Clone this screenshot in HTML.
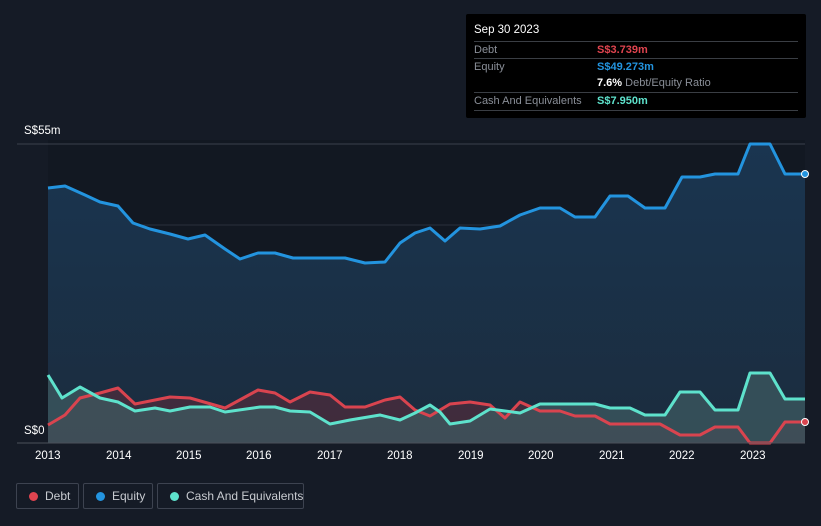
<!DOCTYPE html>
<html><head><style>
html,body{margin:0;background:#151b26;width:821px;height:526px;overflow:hidden;font-family:"Liberation Sans",sans-serif;position:relative}
.tt{position:absolute;left:466px;top:14px;width:340px;height:104px;background:#000;border-radius:2px;font-size:11px;color:#8a8f98}
.tt .h{position:absolute;left:8px;top:10px;color:#fff;font-size:11.5px}
.tt .row{position:absolute;left:8px;width:324px;border-top:1px solid #3a3e44;height:17px;line-height:17px;white-space:nowrap}
.tt .v{position:absolute;left:123px;font-weight:bold}
.leg{position:absolute;top:483px;height:26px;border:1px solid #3d4350;border-radius:2px;color:#c8cbd0;font-size:12px;line-height:24px;box-sizing:border-box;white-space:nowrap}
.leg i{position:absolute;left:12px;top:8px;width:9px;height:9px;border-radius:50%}
.leg span{position:absolute;left:28px}
.ax{position:absolute;color:#fff;font-size:11.5px}
</style></head><body>
<svg width="821" height="526" style="position:absolute;left:0;top:0">
<defs>
<linearGradient id="eg" x1="0" y1="0" x2="0" y2="1"><stop offset="0" stop-color="#1a3550"/><stop offset="1" stop-color="#1b2c3e"/></linearGradient>
</defs>
<rect x="48" y="140" width="757" height="303" fill="#121822"/>
<line x1="17" y1="144" x2="805" y2="144" stroke="#3b414c"/>
<line x1="48" y1="225" x2="805" y2="225" stroke="#2b313c"/>
<line x1="48" y1="333" x2="805" y2="333" stroke="#2b313c"/>
<polygon fill="url(#eg)" points="48,443 48,188 65,186 85,195 100,202 118,206 133,223 150,229 170,234 188,239 205,235 225,249 240,259 258,253 275,253 293,258 310,258 345,258 365,263 385,262 400,243 415,233 430,228 445,241 460,228 480,229 500,226 520,215 540,208 560,208 575,217 595,217 610,196 628,196 645,208 665,208 682,177 700,177 715,174 738,174 750,144 770,144 785,174 805,174 805,443"/>
<polygon fill="#4a2c3c" opacity="0.8" points="48,443 48,425 65,415 80,398 100,393 118,388 135,404 170,397 190,398 225,408 258,390 275,393 290,402 310,392 330,395 345,407 365,407 385,400 400,397 415,410 430,416 450,404 470,402 490,405 505,418 520,402 540,411 560,411 575,416 595,416 610,424 660,424 680,435 700,435 715,427 738,427 750,443 770,443 785,422 805,422 805,443"/>
<polygon fill="#3d5a60" opacity="0.75" points="48,443 48,375 62,398 80,387 100,398 118,402 135,411 155,408 170,411 190,407 210,407 225,412 260,407 275,407 290,411 310,412 330,424 350,420 380,415 400,420 415,413 430,405 440,412 450,424 470,421 490,409 520,413 540,404 595,404 610,408 630,408 645,415 665,415 680,392 700,392 715,410 738,410 750,373 770,373 785,399 805,399 805,443"/>
<g fill="none" stroke-width="3" stroke-linejoin="round">
<polyline stroke="#2394df" points="48,188 65,186 85,195 100,202 118,206 133,223 150,229 170,234 188,239 205,235 225,249 240,259 258,253 275,253 293,258 310,258 345,258 365,263 385,262 400,243 415,233 430,228 445,241 460,228 480,229 500,226 520,215 540,208 560,208 575,217 595,217 610,196 628,196 645,208 665,208 682,177 700,177 715,174 738,174 750,144 770,144 785,174 805,174"/>
<polyline stroke="#d9444f" points="48,425 65,415 80,398 100,393 118,388 135,404 170,397 190,398 225,408 258,390 275,393 290,402 310,392 330,395 345,407 365,407 385,400 400,397 415,410 430,416 450,404 470,402 490,405 505,418 520,402 540,411 560,411 575,416 595,416 610,424 660,424 680,435 700,435 715,427 738,427 750,443 770,443 785,422 805,422"/>
<polyline stroke="#5ee2cc" points="48,375 62,398 80,387 100,398 118,402 135,411 155,408 170,411 190,407 210,407 225,412 260,407 275,407 290,411 310,412 330,424 350,420 380,415 400,420 415,413 430,405 440,412 450,424 470,421 490,409 520,413 540,404 595,404 610,408 630,408 645,415 665,415 680,392 700,392 715,410 738,410 750,373 770,373 785,399 805,399"/>
</g>
<line x1="17" y1="443" x2="805" y2="443" stroke="#4a505a"/>
<circle cx="805" cy="174" r="3.5" fill="#2394df" stroke="#fff"/>
<circle cx="805" cy="422" r="3.5" fill="#d9444f" stroke="#fff"/>
</svg>
<div class="ax" style="left:24px;top:125px">S$55m</div>
<div class="ax" style="left:24px;top:425px">S$0</div>
<div class="ax" style="left:35px;top:450px">2013</div>
<div class="ax" style="left:106px;top:450px">2014</div>
<div class="ax" style="left:176px;top:450px">2015</div>
<div class="ax" style="left:246px;top:450px">2016</div>
<div class="ax" style="left:317px;top:450px">2017</div>
<div class="ax" style="left:387px;top:450px">2018</div>
<div class="ax" style="left:458px;top:450px">2019</div>
<div class="ax" style="left:528px;top:450px">2020</div>
<div class="ax" style="left:599px;top:450px">2021</div>
<div class="ax" style="left:669px;top:450px">2022</div>
<div class="ax" style="left:740px;top:450px">2023</div>
<div class="tt">
<div class="h">Sep 30 2023</div>
<div class="row" style="top:27px">Debt<span class="v" style="color:#e0444f">S$3.739m</span></div>
<div class="row" style="top:44px">Equity<span class="v" style="color:#2394df">S$49.273m</span></div>
<div class="row" style="top:61px;border-top:none"><span class="v" style="color:#fff">7.6% <span style="color:#8a8f98;font-weight:normal">Debt/Equity Ratio</span></span></div>
<div class="row" style="top:78px">Cash And Equivalents<span class="v" style="color:#5ee2cc">S$7.950m</span></div>
<div class="row" style="top:96px"></div>
</div>
<div class="leg" style="left:16px;width:63px"><i style="background:#e0444f"></i><span>Debt</span></div>
<div class="leg" style="left:83px;width:70px"><i style="background:#2394df"></i><span>Equity</span></div>
<div class="leg" style="left:157px;width:147px"><i style="background:#5ee2cc"></i><span>Cash And Equivalents</span></div>
</body></html>
